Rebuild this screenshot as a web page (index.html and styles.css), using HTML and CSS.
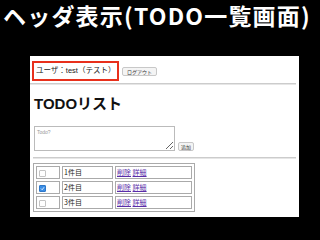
FILE: index.html
```html
<!DOCTYPE html>
<html>
<head>
<meta charset="utf-8">
<title>ヘッダ表示(TODO一覧画面)</title>
<link rel="stylesheet" href="styles.css">
</head>
<body>

<h1 class="slide-title">ヘッダ表示(TODO一覧画面)</h1>

<div class="shot">
  <div class="userbar">
    <span class="userbox">ユーザ：test（テスト）</span>
    <button class="btn">ログアウト</button>
  </div>
  <hr class="line">

  <h2 class="ttl">TODOリスト</h2>
  <div class="addrow">
    <textarea class="todo" placeholder="Todo?"></textarea>
    <button class="btn">追加</button>
  </div>
  <hr class="line line2">

  <table class="list" border="1">
    <tr><td class="ck"><input type="checkbox"></td><td class="nm">1件目</td><td class="op"><a href="#">削除</a> <a href="#">詳細</a></td></tr>
    <tr><td class="ck"><input type="checkbox" checked></td><td class="nm">2件目</td><td class="op"><a href="#">削除</a> <a href="#">詳細</a></td></tr>
    <tr><td class="ck"><input type="checkbox"></td><td class="nm">3件目</td><td class="op"><a href="#">削除</a> <a href="#">詳細</a></td></tr>
  </table>
</div>

</body>
</html>
```

FILE: styles.css
```css
body { margin:0; background:#000; font-family:"Liberation Sans","Noto Sans CJK JP",sans-serif; }
h1.slide-title { margin:0; height:56px; padding:0 0 0 3px; box-sizing:border-box; color:#fff; font-size:23px; line-height:31px; font-weight:bold; letter-spacing:1.2px; white-space:nowrap; font-family:"Noto Sans CJK JP",sans-serif; }

.shot { margin-left:30px; width:269px; height:161px; background:#fff; box-sizing:border-box; padding-top:5px; }
.userbar { display:flex; align-items:center; padding-left:2px; }
.userbox { display:inline-block; width:87px; height:20px; box-sizing:border-box; border:2px solid #e8301c; font-size:7.5px; line-height:16px; padding-left:2px; white-space:nowrap; color:#222; }
.btn { font-family:"Noto Sans CJK JP",sans-serif; font-size:5px; line-height:7px; padding:0 3px; margin-left:3px; border:1px solid #c8c8c8; border-radius:2px; background:#f4f4f4; color:#333; height:9px; white-space:nowrap; }
.userbar .btn { margin-top:1px; padding:0 4px; }

hr.line { margin:2px 3px 0 0; border:0; height:1px; background:#ccc; border-bottom:1px solid #e6e6e6; }
hr.line2 { margin:6px 3px 0 3px; }

h2.ttl { margin:9px 0 0 4px; font-size:15px; line-height:20px; font-weight:bold; color:#111; }
.addrow { display:flex; align-items:flex-end; margin:12px 0 0 4px; }
textarea.todo { width:141px; height:25px; box-sizing:border-box; margin:0; border:1px solid #bbb; resize:both; font-size:5px; padding:2px; font-family:"Liberation Sans",sans-serif; }
textarea.todo::placeholder { color:#999; }
.addrow .btn { padding:0 2px; margin-left:3px; }

table.list { margin:4px 0 0 3px; width:162px; border-collapse:separate; border-spacing:2px; border:1px solid #aaa; }
table.list td { border:1px solid #aaa; height:11px; padding:0 1px; font-size:7px; line-height:9px; font-family:"Noto Sans CJK JP",sans-serif; color:#222; white-space:nowrap; }
td.ck { width:20px; }
td.ck input { appearance:none; -webkit-appearance:none; box-sizing:border-box; width:7px; height:7px; margin:0 0 0 1px; vertical-align:middle; border:1px solid #c4c4c4; border-radius:1px; background:#fff; }
td.ck input:checked { background:#3a8de6 url("data:image/svg+xml,%3Csvg xmlns='http://www.w3.org/2000/svg' viewBox='0 0 8 8'%3E%3Cpath d='M1.5 4l2 2 3-4' fill='none' stroke='%23fff' stroke-width='1.3'/%3E%3C/svg%3E") center/100% no-repeat; border-color:#2f78c8; }
td.nm { width:47px; }
td.op a { color:#5a2da8; }
```
